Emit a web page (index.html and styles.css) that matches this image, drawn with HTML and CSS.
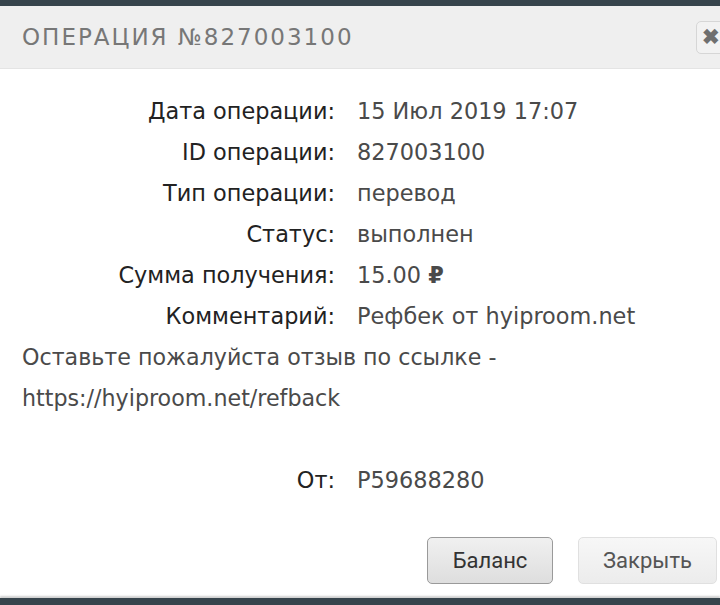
FILE: index.html
```html
<!DOCTYPE html>
<html lang="ru">
<head>
    <meta charset="UTF-8">
    <meta name="viewport" content="width=device-width, initial-scale=1.0">
    <title>Операция №827003100</title>
    <link rel="stylesheet" href="styles.css">
</head>
<body>
    <div class="top-strip"></div>

    <div class="dialog">
        <!-- Заголовок окна -->
        <div class="dialog-header">
            <h1>Операция №827003100</h1>
            <button class="close-button" title="Закрыть">&#10006;</button>
        </div>

        <div class="dialog-body">
            <div class="details">
                <div class="label">Дата операции:</div>
                <div class="value">15 Июл 2019 17:07</div>
                <div class="label">ID операции:</div>
                <div class="value">827003100</div>
                <div class="label">Тип операции:</div>
                <div class="value">перевод</div>
                <div class="label">Статус:</div>
                <div class="value">выполнен</div>
                <div class="label">Сумма получения:</div>
                <div class="value">15.00 <span class="rub">&#8381;</span></div>
                <div class="label">Комментарий:</div>
                <div class="value">Рефбек от hyiproom.net</div>
            </div>

            <p class="note">Оставьте пожалуйста отзыв по ссылке - https://hyiproom.net/refback</p>

            <div class="details from">
                <div class="label">От:</div>
                <div class="value">P59688280</div>
            </div>

            <!-- Кнопки -->
            <div class="actions">
                <button class="btn btn-primary">Баланс</button>
                <button class="btn">Закрыть</button>
            </div>
        </div>
    </div>

    <div class="bottom-strip"></div>
</body>
</html>
```

FILE: styles.css
```css
body {
    font-family: 'DejaVu Sans', 'Open Sans', sans-serif;
    margin: 0;
    padding: 0;
    width: 720px;
    height: 605px;
    overflow: hidden;
    background-color: #fff;
    display: flex;
    flex-direction: column;
}

.top-strip {
    height: 6px;
    background-color: #37444c;
}

.dialog {
    flex: 1;
    display: flex;
    flex-direction: column;
}

.dialog-header {
    height: 62px;
    background-color: #efefef;
    border-bottom: 1px solid #e4e4e4;
    display: flex;
    align-items: center;
    justify-content: space-between;
    padding-left: 22px;
}

h1 {
    margin: 0;
    font-size: 23px;
    font-weight: normal;
    text-transform: uppercase;
    letter-spacing: 2px;
    color: #777;
}

.close-button {
    width: 34px;
    height: 33px;
    margin-right: -10px;
    padding: 0 0 0 5px;
    border: 1px solid #d6d6d6;
    border-radius: 5px;
    background-color: #f2f2f2;
    color: #6f6f6f;
    font-size: 21px;
    font-weight: bold;
    text-align: left;
}

.dialog-body {
    flex: 1;
    padding: 22px 0 0 22px;
    display: flex;
    flex-direction: column;
}

.details {
    display: grid;
    grid-template-columns: 313px auto;
    column-gap: 22px;
    font-size: 22.4px;
    line-height: 41px;
}

.label {
    text-align: right;
    color: #222;
}

.value {
    color: #4a4a4a;
}

.rub {
    font-weight: bold;
}

.note {
    margin: 0 0 41px 0;
    font-size: 22.2px;
    line-height: 41px;
    color: #4a4a4a;
    width: 520px;
}

.actions {
    display: flex;
    justify-content: flex-end;
    gap: 25px;
    margin-top: 36px;
    margin-right: 3px;
}

.btn {
    width: 139px;
    height: 47px;
    border: 1px solid #e0e0e0;
    border-radius: 5px;
    background: linear-gradient(#f7f7f7, #ececec);
    color: #555;
    font-family: Roboto, sans-serif;
    font-size: 22px;
}

.btn-primary {
    width: 126px;
    border-color: #9a9a9a;
    background: linear-gradient(#f0f0f0, #dedede);
    color: #333;
}

.bottom-strip {
    height: 7px;
    background-color: #37444c;
    box-shadow: 0 -2px 2px #d0d0d0;
}
```
